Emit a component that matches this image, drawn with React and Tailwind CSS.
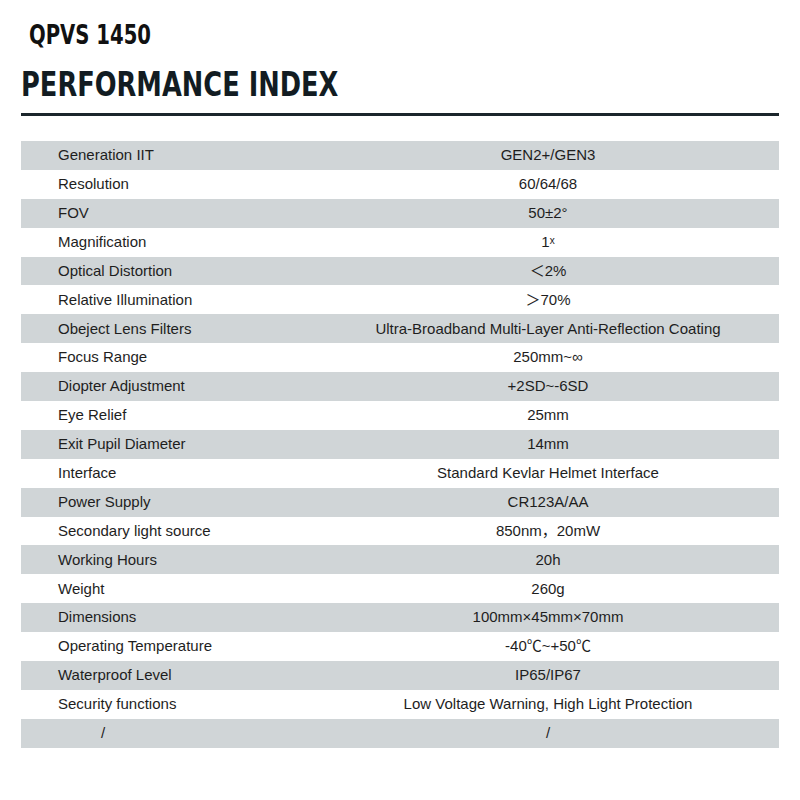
import React from 'react';

const specs = [
    ['Generation IIT', 'GEN2+/GEN3'],
    ['Resolution', '60/64/68'],
    ['FOV', '50±2°'],
    ['Magnification', '1ˣ'],
    ['Optical Distortion', '＜2%'],
    ['Relative Illumination', '＞70%'],
    ['Obeject Lens Filters', 'Ultra-Broadband Multi-Layer Anti-Reflection Coating'],
    ['Focus Range', '250mm~∞'],
    ['Diopter Adjustment', '+2SD~-6SD'],
    ['Eye Relief', '25mm'],
    ['Exit Pupil Diameter', '14mm'],
    ['Interface', 'Standard Kevlar Helmet Interface'],
    ['Power Supply', 'CR123A/AA'],
    ['Secondary light source', '850nm，20mW'],
    ['Working Hours', '20h'],
    ['Weight', '260g'],
    ['Dimensions', '100mm×45mm×70mm'],
    ['Operating Temperature', '-40℃~+50℃'],
    ['Waterproof Level', 'IP65/IP67'],
    ['Security functions', 'Low Voltage Warning, High Light Protection'],
    ['/', '/'],
];

const titleFont = { fontFamily: '"DejaVu Sans Condensed", "DejaVu Sans", sans-serif' };

const App = () => {
    return (
        <div className="w-[800px] h-[800px] bg-white text-[#1e1e1e]" style={{ fontFamily: '"Liberation Sans", "Noto Sans CJK SC", sans-serif' }}>
            <div className="pt-[21px] pl-[29px]">
                <h2 className="inline-block origin-left scale-x-[0.84] text-[26px] leading-[28px] font-bold text-[#111]" style={titleFont}>
                    QPVS 1450
                </h2>
            </div>
            <div className="pt-[15px] pl-[21px]">
                <h1 className="inline-block origin-left scale-x-[0.84] text-[34px] leading-[36px] font-bold text-[#121c22]" style={titleFont}>
                    PERFORMANCE INDEX
                </h1>
            </div>
            <div className="mx-[21px] mt-[10px] h-[3px] bg-[#1b262c]" />
            <div className="mx-[21px] mt-[25px]">
                {specs.map(([label, value], i) => (
                    <div key={i} className={`flex items-center h-[28.9px] text-[15px] ${i % 2 === 0 ? 'bg-[#d0d5d7]' : 'bg-white'}`}>
                        <div className={`w-[296px] ${label === '/' ? 'pl-[80px]' : 'pl-[37px]'}`}>{label}</div>
                        <div className="flex-1 text-center">{value}</div>
                    </div>
                ))}
            </div>
        </div>
    );
};

export default App;
